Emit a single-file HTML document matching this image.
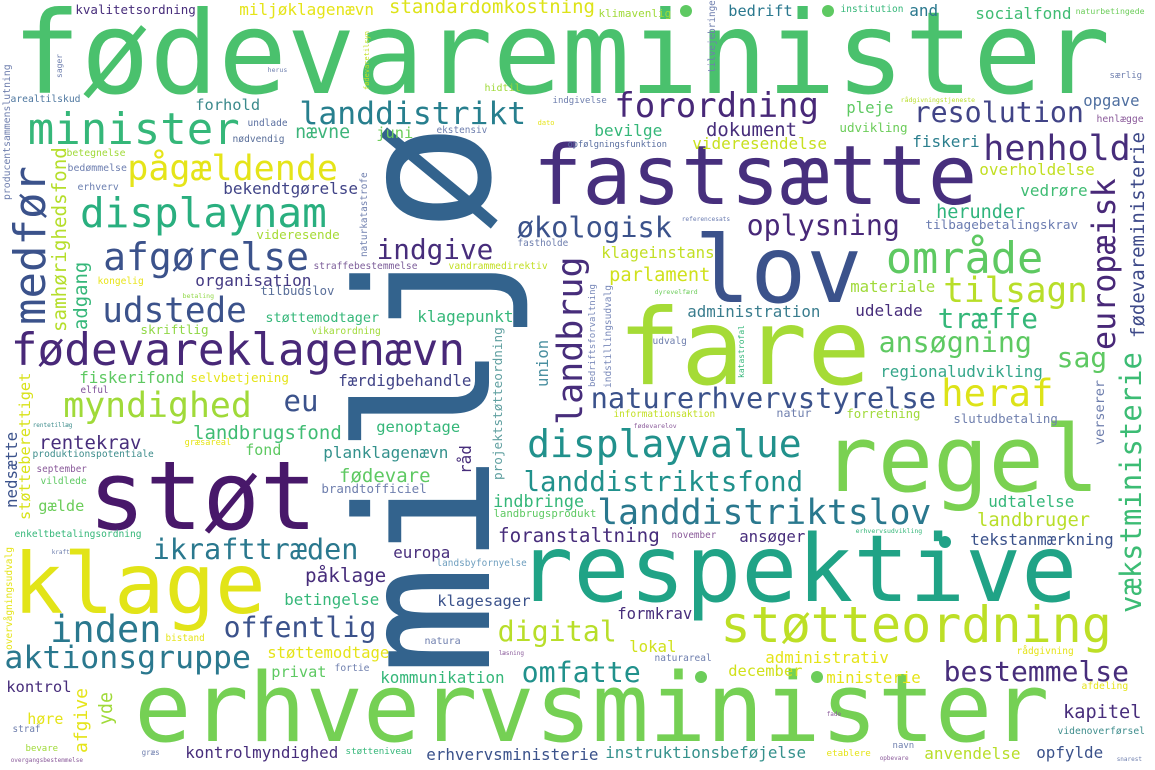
<!DOCTYPE html>
<html><head><meta charset="utf-8"><style>
html,body{margin:0;padding:0;background:#fff}
body{width:1155px;height:770px;position:relative;overflow:hidden}
.w{position:absolute;white-space:nowrap;line-height:1;font-family:"DejaVu Sans Mono","Liberation Mono",monospace;
left:calc(var(--x)*1px - var(--f)*0.05px);top:calc(var(--b)*1px - var(--f)*0.846px);font-size:calc(var(--f)*1px)}
.v{position:absolute;white-space:nowrap;line-height:1;font-family:"DejaVu Sans Mono","Liberation Mono",monospace;
transform:rotate(-90deg);transform-origin:0 0;left:calc(var(--x)*1px - var(--f)*0.846px);top:calc(var(--b)*1px);font-size:calc(var(--f)*1px)}
.d{position:absolute;border-radius:50%;width:12px;height:12px}
</style></head><body>
<!-- big -->
<span class="w" style="--x:18;--b:93;--f:114;color:#4ac16d">fødevareminister</span>
<span class="v" style="--x:490;--b:676;--f:184;color:#33638d">miljø</span>
<span class="w" style="--x:537;--b:205;--f:82;color:#472f7d">fastsætte</span>
<span class="w" style="--x:699;--b:303;--f:93;color:#3b528b">lov</span>
<span class="w" style="--x:623;--b:385;--f:105;color:#a5db36">fare</span>
<span class="w" style="--x:827;--b:492;--f:92;color:#7ad151">regel</span>
<span class="w" style="--x:93;--b:530;--f:95;color:#48186a">støt</span>
<span class="w" style="--x:17;--b:613;--f:84;color:#e2e418">klage</span>
<span class="w" style="--x:522;--b:602;--f:93;color:#20a386">respektive</span>
<span class="w" style="--x:139;--b:742;--f:95;color:#75d054">erhvervsminister</span>
<span class="w" style="--x:723;--b:642;--f:50;color:#bddf26">støtteordning</span>
<span class="w" style="--x:529;--b:457;--f:38;color:#21918c">displayvalue</span>
<span class="w" style="--x:378;--b:259;--f:27.7;color:#472d7b">indgive</span>
<!-- top -->
<span class="w" style="--x:76;--b:15;--f:12.5;color:#472d7b">kvalitetsordning</span>
<span class="w" style="--x:240;--b:16;--f:16;color:#e5e419">miljøklagenævn</span>
<span class="w" style="--x:390;--b:14;--f:19;color:#dde318">standardomkostning</span>
<span class="w" style="--x:599;--b:17;--f:11;color:#a0da39">klimavenlig</span>
<div class="d" style="left:680px;top:5px;background:#5ec962"></div>
<div class="d" style="left:822px;top:5px;background:#5ec962"></div>
<span class="v" style="--x:716;--b:73;--f:9.3;color:#6f7fae">tilvejebringe</span>
<span class="w" style="--x:729;--b:17;--f:15.3;color:#2a788e">bedrift</span>
<span class="w" style="--x:841;--b:13;--f:9.5;color:#35b779">institution</span>
<span class="w" style="--x:910;--b:17;--f:16;color:#2a788e">and</span>
<span class="w" style="--x:976;--b:20;--f:16;color:#3fbc73">socialfond</span>
<span class="w" style="--x:1076;--b:14;--f:8.2;color:#6ccd5a">naturbetingede</span>
<span class="w" style="--x:1110;--b:80;--f:9;color:#6f7fae">særlig</span>
<span class="v" style="--x:63;--b:78;--f:8;color:#6f7fae">sager</span>
<span class="w" style="--x:268;--b:72;--f:6.5;color:#6f7fae">herus</span>
<span class="v" style="--x:370;--b:90;--f:7;color:#c2df23">fødevaretilsyn</span>
<span class="v" style="--x:11;--b:200;--f:9.8;color:#6f7fae">producentsammenslutning</span>
<!-- left upper -->
<span class="w" style="--x:30;--b:145;--f:44;color:#35b779">minister</span>
<span class="w" style="--x:301;--b:126;--f:31.4;color:#277f8e">landdistrikt</span>
<span class="w" style="--x:196;--b:111;--f:15.4;color:#3b8a8c">forhold</span>
<span class="w" style="--x:11;--b:103;--f:9.7;color:#4f78a0">arealtilskud</span>
<span class="w" style="--x:248;--b:127;--f:9.5;color:#5a6fa0">undlade</span>
<span class="w" style="--x:296;--b:139;--f:18.3;color:#3db47a">nævne</span>
<span class="w" style="--x:377;--b:139;--f:15.4;color:#6ccd5a">juni</span>
<span class="w" style="--x:233;--b:143;--f:9.6;color:#5a6f9a">nødvendig</span>
<span class="w" style="--x:437;--b:134;--f:9.4;color:#6f7fae">ekstensiv</span>
<span class="w" style="--x:538;--b:126;--f:7;color:#e5e419">dato</span>
<span class="w" style="--x:485;--b:92;--f:10;color:#a0da39">hidtil</span>
<span class="w" style="--x:553;--b:105;--f:9;color:#6f7fae">indgivelse</span>
<span class="w" style="--x:568;--b:148;--f:8.7;color:#5a6fa0">opfølgningsfunktion</span>
<span class="w" style="--x:129;--b:182;--f:35;color:#e5e419">pågældende</span>
<span class="w" style="--x:67;--b:157;--f:9.8;color:#a0da39">betegnelse</span>
<span class="w" style="--x:68;--b:172;--f:9.9;color:#6e7fb0">bedømmelse</span>
<span class="w" style="--x:78;--b:191;--f:9.8;color:#6b7fb0">erhverv</span>
<span class="w" style="--x:224;--b:195;--f:16;color:#414487">bekendtgørelse</span>
<span class="w" style="--x:82;--b:228;--f:41;color:#29af7f">displaynam</span>
<span class="w" style="--x:257;--b:240;--f:12.6;color:#a6db35">videresende</span>
<span class="w" style="--x:105;--b:270;--f:38;color:#3b528b">afgørelse</span>
<span class="w" style="--x:196;--b:287;--f:16.1;color:#443a83">organisation</span>
<span class="w" style="--x:314;--b:270;--f:9.6;color:#7d5e9a">straffebestemmelse</span>
<span class="w" style="--x:449;--b:270;--f:9.7;color:#c2df23">vandrammedirektiv</span>
<span class="w" style="--x:518;--b:247;--f:9.4;color:#6f7fae">fastholde</span>
<span class="w" style="--x:98;--b:285;--f:9.6;color:#e8e41a">kongelig</span>
<span class="w" style="--x:261;--b:295;--f:12.3;color:#5a6f9a">tilbudslov</span>
<span class="w" style="--x:183;--b:298;--f:6.5;color:#8fd744">betaling</span>
<span class="w" style="--x:104;--b:323;--f:34.3;color:#3b528b">udstede</span>
<span class="w" style="--x:266;--b:323;--f:13.5;color:#35b779">støttemodtager</span>
<span class="w" style="--x:418;--b:323;--f:16;color:#35b779">klagepunkt</span>
<span class="w" style="--x:141;--b:335;--f:12.6;color:#8fd744">skriftlig</span>
<span class="w" style="--x:312;--b:335;--f:9.6;color:#a0da39">vikarordning</span>
<span class="w" style="--x:13;--b:367;--f:44.4;color:#482878">fødevareklagenævn</span>
<span class="w" style="--x:80;--b:383;--f:15.9;color:#5ec962">fiskerifond</span>
<span class="w" style="--x:191;--b:383;--f:12.6;color:#e5e419">selvbetjening</span>
<span class="w" style="--x:339;--b:386;--f:15.8;color:#414487">færdigbehandle</span>
<span class="w" style="--x:81;--b:394;--f:9.3;color:#7e4e98">elful</span>
<span class="w" style="--x:285;--b:412;--f:29;color:#3b528b">eu</span>
<span class="w" style="--x:65;--b:418;--f:34.8;color:#a0da39">myndighed</span>
<span class="v" style="--x:548;--b:387;--f:15.7;color:#4a8fa0">union</span>
<span class="v" style="--x:46;--b:325;--f:44;color:#3b528b">medfør</span>
<span class="v" style="--x:66;--b:332;--f:19.2;color:#b5de2b">samhørighedsfond</span>
<span class="v" style="--x:88;--b:330;--f:18.9;color:#35b779">adgang</span>
<span class="v" style="--x:368;--b:257;--f:9.4;color:#6f7fae">naturkatastrofe</span>
<span class="v" style="--x:31;--b:520;--f:15.3;color:#d8e219">støtteberettiget</span>
<!-- right upper -->
<span class="w" style="--x:616;--b:118;--f:34;color:#482878">forordning</span>
<span class="w" style="--x:847;--b:113;--f:15.7;color:#5ec962">pleje</span>
<span class="w" style="--x:915;--b:123;--f:28.3;color:#414487">resolution</span>
<span class="w" style="--x:1084;--b:107;--f:15.6;color:#4f6fa0">opgave</span>
<span class="w" style="--x:901;--b:102;--f:6.5;color:#b8de29">rådgivningstjeneste</span>
<span class="w" style="--x:1097;--b:123;--f:9.8;color:#8a5a9a">henlægge</span>
<span class="w" style="--x:595;--b:137;--f:16.2;color:#35b779">bevilge</span>
<span class="w" style="--x:707;--b:137;--f:18.9;color:#472d7b">dokument</span>
<span class="w" style="--x:840;--b:133;--f:12.6;color:#6ccd5a">udvikling</span>
<span class="w" style="--x:693;--b:150;--f:16;color:#c8e020">videresendelse</span>
<span class="w" style="--x:913;--b:148;--f:16;color:#2c7f8e">fiskeri</span>
<span class="w" style="--x:985;--b:162;--f:35;color:#472d7b">henhold</span>
<span class="w" style="--x:980;--b:176;--f:16;color:#c2df23">overholdelse</span>
<span class="w" style="--x:1021;--b:197;--f:16;color:#3fbc73">vedrøre</span>
<span class="v" style="--x:1117;--b:350;--f:31.7;color:#482878">europæisk</span>
<span class="v" style="--x:1145;--b:338;--f:19;color:#3e4a89">fødevareministerie</span>
<span class="v" style="--x:1141;--b:613;--f:28.9;color:#3cbc74">vækstministerie</span>
<span class="v" style="--x:1105;--b:445;--f:13.5;color:#6f7fae">verserer</span>
<span class="w" style="--x:748;--b:236;--f:28.3;color:#482878">oplysning</span>
<span class="w" style="--x:518;--b:237;--f:28.7;color:#3b528b">økologisk</span>
<span class="w" style="--x:937;--b:220;--f:18.5;color:#2fb47c">herunder</span>
<span class="w" style="--x:926;--b:230;--f:12.7;color:#6a7bb0">tilbagebetalingskrav</span>
<span class="w" style="--x:682;--b:222;--f:6.2;color:#6a7bb0">referencesats</span>
<span class="w" style="--x:602;--b:258;--f:15.7;color:#c2df23">klageinstans</span>
<span class="w" style="--x:888;--b:275;--f:43.6;color:#5ec962">område</span>
<span class="w" style="--x:945;--b:303;--f:34.3;color:#b8de29">tilsagn</span>
<span class="w" style="--x:939;--b:329;--f:27.8;color:#35b779">træffe</span>
<span class="w" style="--x:610;--b:283;--f:18.7;color:#d0e11c">parlament</span>
<span class="w" style="--x:851;--b:292;--f:15.7;color:#a0da39">materiale</span>
<span class="w" style="--x:655;--b:294;--f:6.5;color:#6ccd5a">dyrevelfærd</span>
<span class="w" style="--x:688;--b:317;--f:15.8;color:#3a7d8e">administration</span>
<span class="w" style="--x:856;--b:317;--f:16;color:#472d7b">udelade</span>
<span class="w" style="--x:880;--b:353;--f:28.3;color:#5ec962">ansøgning</span>
<span class="w" style="--x:1058;--b:368;--f:28;color:#5ec962">sag</span>
<span class="w" style="--x:881;--b:377;--f:15.9;color:#35a68a">regionaludvikling</span>
<span class="w" style="--x:653;--b:345;--f:9.5;color:#6f7fae">udvalg</span>
<span class="v" style="--x:597;--b:387;--f:9;color:#7a8aba">bedriftsforvaltning</span>
<span class="v" style="--x:612;--b:388;--f:9.5;color:#7a8aba">indstillingsudvalg</span>
<span class="v" style="--x:745;--b:378;--f:8;color:#35b779">katastrofal</span>
<span class="v" style="--x:584;--b:425;--f:35;color:#472d7b">landbrug</span>
<span class="w" style="--x:592;--b:408;--f:28.7;color:#3b528b">naturerhvervstyrelse</span>
<span class="w" style="--x:943;--b:407;--f:37.3;color:#dde318">heraf</span>
<span class="w" style="--x:614;--b:418;--f:9.4;color:#c2df23">informationsaktion</span>
<span class="w" style="--x:777;--b:418;--f:11.7;color:#6f7fae">natur</span>
<span class="w" style="--x:847;--b:418;--f:12.3;color:#a0da39">forretning</span>
<span class="w" style="--x:954;--b:423;--f:12.4;color:#6f7fae">slutudbetaling</span>
<span class="w" style="--x:634;--b:428;--f:6.5;color:#8a5a9a">fødevarelov</span>
<!-- left lower -->
<span class="w" style="--x:194;--b:440;--f:19;color:#3fbc73">landbrugsfond</span>
<span class="w" style="--x:377;--b:433;--f:15.5;color:#35b779">genoptage</span>
<span class="w" style="--x:40;--b:450;--f:18.9;color:#472d7b">rentekrav</span>
<span class="w" style="--x:33;--b:428;--f:6;color:#3e8d8c">rentetillæg</span>
<span class="w" style="--x:185;--b:446;--f:8.6;color:#e5e419">græsareal</span>
<span class="w" style="--x:246;--b:456;--f:15;color:#5ec962">fond</span>
<span class="w" style="--x:324;--b:459;--f:16;color:#33918c">planklagenævn</span>
<span class="w" style="--x:33;--b:458;--f:9.6;color:#3e8d8c">produktionspotentiale</span>
<span class="v" style="--x:17;--b:508;--f:15.8;color:#3b528b">nedsætte</span>
<span class="w" style="--x:37;--b:473;--f:9.3;color:#8a5a9a">september</span>
<span class="w" style="--x:41;--b:485;--f:9.6;color:#5ec962">vildlede</span>
<span class="w" style="--x:340;--b:483;--f:19;color:#5ec962">fødevare</span>
<span class="w" style="--x:322;--b:494;--f:12.5;color:#6f7fae">brandtofficiel</span>
<span class="v" style="--x:472;--b:474;--f:16;color:#472d7b">råd</span>
<span class="v" style="--x:503;--b:480;--f:12.7;color:#5f9fa0">projektstøtteordning</span>
<span class="w" style="--x:39;--b:512;--f:15.3;color:#6ccd5a">gælde</span>
<span class="w" style="--x:494;--b:507;--f:16.8;color:#35b779">indbringe</span>
<span class="w" style="--x:494;--b:518;--f:10.7;color:#5ec962">landbrugsprodukt</span>
<span class="w" style="--x:15;--b:538;--f:9.6;color:#35b779">enkeltbetalingsordning</span>
<span class="w" style="--x:154;--b:560;--f:28.5;color:#2a788e">ikrafttræden</span>
<span class="w" style="--x:394;--b:558;--f:15.8;color:#472d7b">europa</span>
<span class="w" style="--x:437;--b:567;--f:9.4;color:#6f9fbf">landsbyfornyelse</span>
<span class="w" style="--x:52;--b:555;--f:6;color:#6f7fae">kraft</span>
<span class="v" style="--x:13;--b:650;--f:9.5;color:#e5e419">overvågningsudvalg</span>
<span class="w" style="--x:306;--b:582;--f:19.3;color:#472d7b">påklage</span>
<span class="w" style="--x:285;--b:605;--f:15.8;color:#35b779">betingelse</span>
<span class="w" style="--x:438;--b:607;--f:15.5;color:#3b528b">klagesager</span>
<span class="w" style="--x:52;--b:642;--f:37;color:#2a788e">inden</span>
<span class="w" style="--x:225;--b:638;--f:28.2;color:#3b528b">offentlig</span>
<span class="w" style="--x:499;--b:642;--f:28.3;color:#b8de29">digital</span>
<span class="w" style="--x:166;--b:642;--f:9.3;color:#e5e419">bistand</span>
<span class="w" style="--x:425;--b:645;--f:10;color:#6f7fae">natura</span>
<span class="w" style="--x:6;--b:670;--f:31.5;color:#2a788e">aktionsgruppe</span>
<span class="w" style="--x:268;--b:659;--f:15.6;color:#e5e419">støttemodtage</span>
<span class="w" style="--x:499;--b:656;--f:6;color:#8a5a9a">læsning</span>
<span class="w" style="--x:272;--b:678;--f:15.3;color:#5ec962">privat</span>
<span class="w" style="--x:335;--b:672;--f:9.7;color:#6f7fae">fortie</span>
<span class="w" style="--x:381;--b:683;--f:15.9;color:#35b779">kommunikation</span>
<span class="w" style="--x:523;--b:683;--f:28.3;color:#21918c">omfatte</span>
<span class="w" style="--x:7;--b:693;--f:15.5;color:#472d7b">kontrol</span>
<span class="v" style="--x:88;--b:753;--f:18;color:#e5e419">afgive</span>
<span class="v" style="--x:113;--b:725;--f:18.3;color:#a0da39">yde</span>
<span class="w" style="--x:28;--b:725;--f:15;color:#e5e419">høre</span>
<span class="w" style="--x:13;--b:733;--f:9.3;color:#6f7fae">straf</span>
<span class="w" style="--x:26;--b:753;--f:9;color:#a0da39">bevare</span>
<span class="w" style="--x:11;--b:763;--f:6;color:#8a5a9a">overgangsbestemmelse</span>
<span class="w" style="--x:142;--b:755;--f:7.5;color:#6f7fae">græs</span>
<span class="w" style="--x:186;--b:758;--f:15.9;color:#472d7b">kontrolmyndighed</span>
<span class="w" style="--x:346;--b:755;--f:9.2;color:#35b779">støtteniveau</span>
<span class="w" style="--x:427;--b:760;--f:15.9;color:#3b528b">erhvervsministerie</span>
<!-- right lower -->
<span class="w" style="--x:525;--b:492;--f:27.3;color:#21918c">landdistriktsfond</span>
<span class="w" style="--x:599;--b:525;--f:34.7;color:#2a788e">landdistriktslov</span>
<span class="w" style="--x:989;--b:507;--f:15.9;color:#35b779">udtalelse</span>
<span class="w" style="--x:978;--b:528;--f:18.8;color:#b8de29">landbruger</span>
<span class="w" style="--x:499;--b:542;--f:19.2;color:#472d7b">foranstaltning</span>
<span class="w" style="--x:672;--b:539;--f:9.3;color:#8a5a9a">november</span>
<span class="w" style="--x:740;--b:542;--f:15.7;color:#472d7b">ansøger</span>
<span class="w" style="--x:856;--b:533;--f:6.5;color:#35b779">erhvervsudvikling</span>
<span class="w" style="--x:971;--b:545;--f:15.9;color:#3b528b">tekstanmærkning</span>
<div class="d" style="left:939px;top:536px;background:#1fa187"></div>
<span class="w" style="--x:618;--b:620;--f:15.6;color:#472d7b">formkrav</span>
<span class="w" style="--x:630;--b:652;--f:15.7;color:#d0e11c">lokal</span>
<span class="w" style="--x:655;--b:662;--f:9.5;color:#6f7fae">naturareal</span>
<span class="w" style="--x:766;--b:663;--f:15.8;color:#e5e419">administrativ</span>
<span class="w" style="--x:1017;--b:655;--f:9.5;color:#e5e419">rådgivning</span>
<span class="w" style="--x:729;--b:677;--f:15.4;color:#d0e11c">december</span>
<span class="w" style="--x:827;--b:683;--f:15.7;color:#e5e419">ministerie</span>
<span class="w" style="--x:945;--b:682;--f:28;color:#472d7b">bestemmelse</span>
<span class="w" style="--x:1082;--b:690;--f:9.7;color:#e5e419">afdeling</span>
<div class="d" style="left:695px;top:671px;background:#6ccd5a"></div>
<div class="d" style="left:811px;top:671px;background:#6ccd5a"></div>
<span class="w" style="--x:1064;--b:720;--f:18.6;color:#472d7b">kapitel</span>
<span class="w" style="--x:827;--b:717;--f:6;color:#8a5a9a">fade</span>
<span class="w" style="--x:1058;--b:735;--f:9.7;color:#3e8d8c">videnoverførsel</span>
<span class="w" style="--x:606;--b:758;--f:15.9;color:#35918c">instruktionsbeføjelse</span>
<span class="w" style="--x:827;--b:757;--f:9.2;color:#e5e419">etablere</span>
<span class="w" style="--x:893;--b:750;--f:9;color:#6f7fae">navn</span>
<span class="w" style="--x:880;--b:761;--f:6;color:#8a5a9a">opbevare</span>
<span class="w" style="--x:925;--b:760;--f:16;color:#b8de29">anvendelse</span>
<span class="w" style="--x:1037;--b:758;--f:15.9;color:#3b528b">opfylde</span>
<span class="w" style="--x:1117;--b:762;--f:6;color:#6f7fae">snarest</span>
</body></html>
